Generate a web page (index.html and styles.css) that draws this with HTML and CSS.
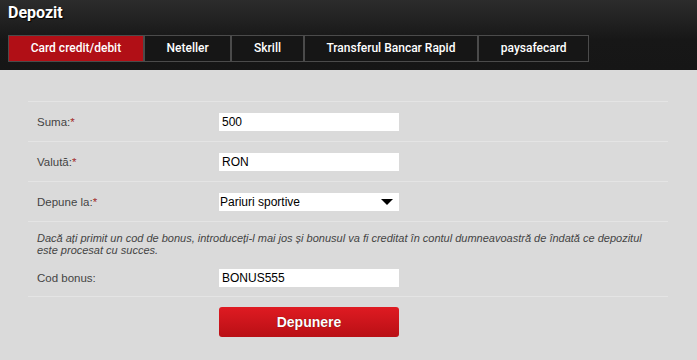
FILE: index.html
```html
<!DOCTYPE html>
<html lang="ro">
  <head>
    <meta charset="UTF-8" />
    <title>Depozit</title>
    <link rel="stylesheet" href="styles.css">
  </head>
  <body>
    <header class="deposit-header">
      <h1>Depozit</h1>
      <nav class="tabs">
        <a class="tab active">Card credit/debit</a>
        <a class="tab">Neteller</a>
        <a class="tab">Skrill</a>
        <a class="tab">Transferul Bancar Rapid</a>
        <a class="tab">paysafecard</a>
      </nav>
    </header>

    <main class="deposit-body">
      <form class="deposit-form">
        <div class="form-row">
          <label>Suma:<span class="req">*</span></label>
          <input type="text" value="500" />
        </div>
        <div class="form-row">
          <label>Valută:<span class="req">*</span></label>
          <input type="text" value="RON" />
        </div>
        <div class="form-row">
          <label>Depune la:<span class="req">*</span></label>
          <span class="select-wrap">
            <select>
              <option>Pariuri sportive</option>
              <option>Cazino</option>
            </select>
          </span>
        </div>
        <div class="bonus-block">
          <p class="note">
            Dacă ați primit un cod de bonus, introduceți-l mai jos și bonusul va fi creditat în contul dumneavoastră de îndată ce depozitul este procesat cu succes.
          </p>
          <div class="form-row plain">
            <label>Cod bonus:</label>
            <input type="text" value="BONUS555" />
          </div>
        </div>
        <div class="actions">
          <button type="button" class="btn-deposit">Depunere</button>
        </div>
      </form>
    </main>
  </body>
</html>
```

FILE: styles.css
```css
* {
  box-sizing: border-box;
  margin: 0;
  padding: 0;
}

body {
  font-family: "Liberation Sans", Arial, sans-serif;
  background: #dadada;
  color: #3a3a3a;
  width: 697px;
  height: 360px;
  overflow: hidden;
}

/* Cabecera oscura */
.deposit-header {
  height: 70px;
  padding: 6px 8px 0;
  background: linear-gradient(#2c2c2c, #171717 40px, #161616);
}

.deposit-header h1 {
  font-family: Roboto, "Liberation Sans", sans-serif;
  font-size: 16px;
  font-weight: 700;
  line-height: 14px;
  color: #fff;
  text-shadow: 1px 1px 1px #000;
  height: 29px;
}

.tabs {
  display: flex;
}

.tab {
  font-family: Roboto, "Liberation Sans", sans-serif;
  font-size: 12px;
  font-weight: 500;
  color: #fff;
  height: 27px;
  line-height: 25px;
  padding: 0 21.7px;
  border: 1px solid #4b4b4b;
  background: #161616;
  white-space: nowrap;
}

.tab.active {
  background: #b10f16;
}

/* Formulario */
.deposit-body {
  padding: 31px 29px 0 28px;
}

.form-row {
  display: flex;
  align-items: center;
  height: 40px;
  border-top: 1px solid #e4e4e4;
  padding-left: 9px;
}

.form-row.plain {
  border-top: 0;
}

.form-row label {
  width: 182px;
  font-size: 11.5px;
  color: #444;
}

.req {
  color: #a32a2a;
}

.form-row input,
.select-wrap select {
  width: 180px;
  height: 18px;
  border: 0;
  background: #fff;
  font-family: "Liberation Sans", Arial, sans-serif;
  font-size: 12px;
  color: #000;
  padding: 0 3px;
  outline: none;
}

.select-wrap {
  position: relative;
  display: block;
}

.select-wrap select {
  appearance: none;
  -webkit-appearance: none;
  padding-left: 1px;
  border-radius: 0;
}

.select-wrap::after {
  content: "";
  position: absolute;
  right: 6px;
  top: 7px;
  border-left: 6px solid transparent;
  border-right: 6px solid transparent;
  border-top: 6px solid #000;
  pointer-events: none;
}

.bonus-block {
  border-top: 1px solid #e4e4e4;
  border-bottom: 1px solid #e4e4e4;
  padding-top: 10px;
}

.note {
  font-size: 11px;
  font-style: italic;
  line-height: 12px;
  color: #444;
  padding: 0 9px;
  margin-bottom: 3px;
}

.bonus-block .form-row {
  height: 37px;
}

.actions {
  padding: 10px 0 0 191px;
}

.btn-deposit {
  width: 180px;
  height: 30px;
  border: 0;
  border-radius: 3px;
  background: linear-gradient(#df1b22, #b90f15);
  color: #fff;
  font-family: "Liberation Sans", Arial, sans-serif;
  font-size: 14px;
  font-weight: 700;
  text-shadow: 0 0 1px #600;
}
```
